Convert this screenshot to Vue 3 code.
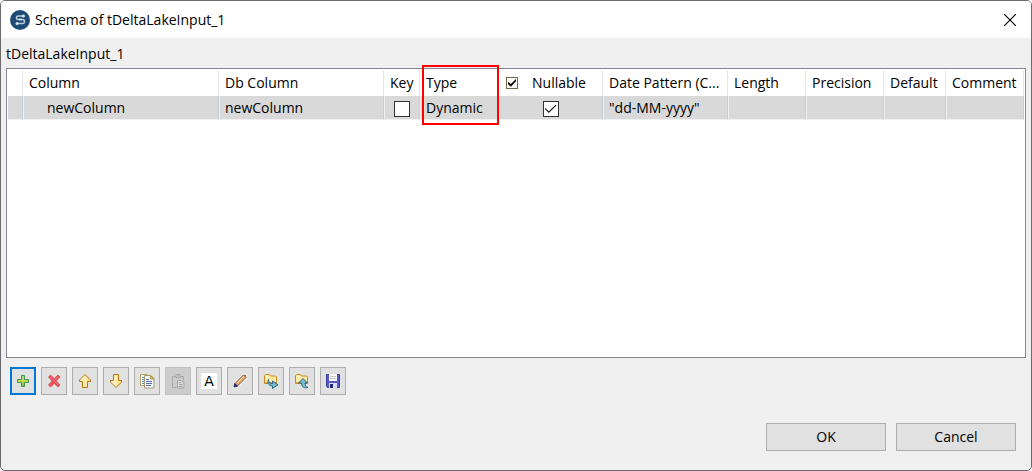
<script setup>
import { ref } from 'vue'

const allNullable = ref(true)
const columns = [
  { id: 'mark', label: '', width: 15 },
  { id: 'column', label: 'Column', width: 196 },
  { id: 'db', label: 'Db Column', width: 165 },
  { id: 'key', label: 'Key', width: 36 },
  { id: 'type', label: 'Type', width: 78 },
  { id: 'nullable', label: 'Nullable', width: 105 },
  { id: 'pattern', label: 'Date Pattern (C...', width: 125 },
  { id: 'length', label: 'Length', width: 78 },
  { id: 'precision', label: 'Precision', width: 78 },
  { id: 'default', label: 'Default', width: 62 },
  { id: 'comment', label: 'Comment', width: 78 }
]
const rows = ref([
  { column: 'newColumn', db: 'newColumn', key: false, type: 'Dynamic', nullable: true, pattern: '"dd-MM-yyyy"' }
])
</script>

<template>
  <main class="dialog">
    <header class="titlebar">
      <svg class="logo" viewBox="0 0 20 20" aria-hidden="true">
        <circle cx="10" cy="10" r="10" fill="#1d4b75" />
        <path d="M13 6H8.200a1.700 1.700 0 0 0 0 3.500h4.300a2 2 0 0 1 0 4H8" fill="none" stroke="#b9cad9" stroke-width="1.500" />
        <circle cx="13.500" cy="6" r="1.500" fill="#dce6ee" />
        <circle cx="7" cy="13.500" r="1.500" fill="#dce6ee" />
        <path d="M9 9.500h3" stroke="#eef3f7" stroke-width="1.500" />
      </svg>
      <h1>Schema of tDeltaLakeInput_1</h1>
      <button class="close" type="button" aria-label="Close">
        <svg viewBox="0 0 12 12" width="12" height="12"><path d="M0 0L12 12M12 0L0 12" stroke="#000" stroke-width="1.100" /></svg>
      </button>
    </header>

    <h2 class="caption">tDeltaLakeInput_1</h2>

    <section class="grid">
      <table>
        <colgroup>
          <col v-for="c in columns" :key="c.id" :style="{ width: c.width + 'px' }" />
        </colgroup>
        <thead>
          <tr>
            <th v-for="c in columns" :key="c.id" :class="'c-' + c.id">
              <label v-if="c.id === 'nullable'" class="head-check">
                <input v-model="allNullable" type="checkbox" class="small" />
                <span>{{ c.label }}</span>
              </label>
              <span v-else-if="c.id === 'type'" class="marked">{{ c.label }}</span>
              <template v-else>{{ c.label }}</template>
            </th>
          </tr>
        </thead>
        <tbody>
          <tr v-for="(row, i) in rows" :key="i">
            <td v-for="c in columns" :key="c.id" :class="'c-' + c.id">
              <input v-if="c.id === 'key'" v-model="row.key" type="checkbox" aria-label="Key" />
              <input v-else-if="c.id === 'nullable'" v-model="row.nullable" type="checkbox" aria-label="Nullable" />
              <template v-else>{{ row[c.id] }}</template>
            </td>
          </tr>
        </tbody>
      </table>
    </section>

    <div class="toolbar" role="toolbar">
      <button type="button" class="active" aria-label="Add">
        <svg viewBox="0 0 16 16">
          <defs><linearGradient id="plus" x1="0" y1="0" x2="0" y2="1"><stop offset="0" stop-color="#a5d58a" /><stop offset=".5" stop-color="#c9dc4e" /><stop offset="1" stop-color="#6fb544" /></linearGradient></defs>
          <path d="M6.500 2.500h3v4h4v3h-4v4h-3v-4h-4v-3h4z" fill="url(#plus)" stroke="#3f9157" />
        </svg>
      </button>
      <button type="button" aria-label="Remove">
        <svg viewBox="0 0 16 16">
          <path d="M2.500 4l2-2 3.700 3.500L12 2l2 2-3.600 4 3.600 4-2 2-3.800-3.500L4.500 14l-2-2L6 8z" fill="#ee4f59" stroke="#d9606a" />
          <path d="M4.500 4l7.500 8M12 4l-3 3" stroke="#f5777c" />
        </svg>
      </button>
      <button type="button" aria-label="Move up">
        <svg viewBox="0 0 16 16">
          <defs><linearGradient id="gold"><stop offset="0" stop-color="#fffbe0" /><stop offset="1" stop-color="#ffdc78" /></linearGradient></defs>
          <path d="M8 1.500L13.500 7v1.500h-3v6h-5v-6h-3V7z" fill="url(#gold)" stroke="#b9790f" />
        </svg>
      </button>
      <button type="button" aria-label="Move down">
        <svg viewBox="0 0 16 16"><path d="M5.500 1.500h5v6h3V9L8 14.500 2.500 9V7.500h3z" fill="url(#gold)" stroke="#b9790f" /></svg>
      </button>
      <button type="button" aria-label="Copy">
        <svg viewBox="0 0 16 16">
          <path d="M1.500 1.500h7v11h-7z" fill="#fff" stroke="#b4a35b" />
          <path d="M3 4.500h3M3 6.500h2M3 8.500h2M3 10.500h2" stroke="#5c83b8" />
          <path d="M5.500 2.500h6.500l3 3v9.500H5.500z" fill="#f5f8fc" stroke="#a59b78" />
          <path d="M11.500 2.500v3.500H15z" fill="#e2c35c" stroke="#b4953f" />
          <path d="M7 6.500h3M7 8.500h6M7 10.500h6M7 12.500h5" stroke="#4f6fae" />
        </svg>
      </button>
      <button type="button" disabled aria-label="Paste">
        <svg viewBox="0 0 16 16" fill="none" stroke="#a8a8a8">
          <path d="M6.500 14.500h-4v-11h11v4" /><path d="M5.500 3.500l1-2h3l1 2v1h-5z" fill="#c0c0c0" />
          <path d="M7.500 7.500h4l2.500 2.500v5H7.500z" fill="#d8d8d8" /><path d="M9 9.500h2M9 11.500h3.500M9 13.500h3.500" />
        </svg>
      </button>
      <button type="button" aria-label="Font"><span class="letter">A</span></button>
      <button type="button" aria-label="Edit">
        <svg viewBox="0 0 16 16">
          <path d="M1 15l1-5L11 1h3l1 1v3L6 14z" fill="#f7f7f7" stroke="#f7f7f7" />
          <path d="M3 10.500l8.500-8.500 2 .5.500 2L5.500 13z" fill="#e5ad72" stroke="#81502b" />
          <path d="M5 10l7-7" stroke="#ffe0ac" /><path d="M2 14l.6-3.500 2.900 2.700z" fill="#202e70" stroke="#202e70" />
        </svg>
      </button>
      <button type="button" aria-label="Import">
        <svg viewBox="0 0 16 16">
          <path d="M1.500 10.500v-8l1-1h4l1 1.500h5l1 1v6.500z" fill="#ffeaa0" stroke="#ca8823" />
          <path d="M2 9.500h11" stroke="#e9ad4a" /><path d="M3 4h4" stroke="#fffadf" />
          <path d="M5.500 6.500c0 3 1.500 4 4 4V8L15 11.800 9.500 15.500V13C6 13 4 10 5.500 6.500z" fill="#78b9cb" stroke="#23678c" />
        </svg>
      </button>
      <button type="button" aria-label="Export">
        <svg viewBox="0 0 16 16">
          <path d="M1.500 10.500v-8l1-1h4l1 1.500h5l1 1v6.500z" fill="#ffeaa0" stroke="#ca8823" />
          <path d="M2 9.500h11" stroke="#e9ad4a" /><path d="M3 4h4" stroke="#fffadf" />
          <path d="M9 5.500l4.500 4.500h-2.500c0 2 .5 3.500 3 4.500-4 1-6.500-.5-6.500-4.500H4.500z" fill="#78b9cb" stroke="#23678c" />
        </svg>
      </button>
      <button type="button" aria-label="Save">
        <svg viewBox="0 0 16 16">
          <path d="M1.500 1.500h13v13h-12l-1-1z" fill="#5658c5" stroke="#3e3e9f" />
          <path d="M4 1h8v7H4z" fill="#fff" /><path d="M5 3.500h6M5 5.500h6" stroke="#c9c9c9" />
          <path d="M4 10h8v5H4z" fill="#d8dcf0" /><path d="M5 11h3v4H5z" fill="#28286f" />
        </svg>
      </button>
    </div>

    <footer class="actions">
      <button type="button">OK</button>
      <button type="button">Cancel</button>
    </footer>
  </main>
</template>

<style>
body {
  background: #fff;
}
</style>

<style scoped>
*,
*::after {
  box-sizing: border-box;
}
.dialog {
  display: flex;
  flex-direction: column;
  min-height: 100vh;
  overflow: hidden;
  border: 1px solid #6b6b6b;
  border-radius: 5px;
  background: #f0f0f0;
  color: #000;
  font: 14px/20px "Open Sans", "Noto Sans", sans-serif;
}
button {
  padding: 0;
  color: inherit;
  font: inherit;
}
.titlebar {
  display: flex;
  align-items: center;
  height: 37px;
  padding: 0 13px 0 9px;
  gap: 5px;
  background: #fff;
}
.logo {
  width: 20px;
  height: 20px;
}
h1,
h2 {
  margin: 0;
  font-size: 14px;
  font-weight: 400;
}
.close {
  display: grid;
  margin-left: auto;
  padding: 2px;
  border: 0;
  background: none;
}
.caption {
  padding: 6px 5px 4px;
}
.grid {
  flex: 1;
  margin: 0 5px;
  padding: 1px 1px 0;
  border: 1px solid #828790;
  background: #fff;
}
table {
  width: 100%;
  table-layout: fixed;
  border-collapse: separate;
  border-spacing: 0;
}
th,
td {
  padding: 0 0 0 5px;
  border-right: 1px solid #e5e5e5;
  font-weight: 400;
  text-align: left;
  white-space: nowrap;
}
th {
  height: 26px;
}
td {
  height: 24px;
  border-right-color: #c3cfda;
  border-bottom: 1px solid #f0f0f0;
  background: #d9d9d9;
}
td + td {
  border-left: 1px solid #f0f0f0;
}
th + th {
  padding-left: 6px;
}
td.c-column {
  padding-left: 23px;
}
th.c-nullable {
  padding-left: 8px;
}
td.c-key,
td.c-nullable {
  padding: 0;
  text-align: center;
}
.head-check {
  display: flex;
  align-items: center;
  gap: 14px;
}
th.c-type {
  position: relative;
}
.marked::after {
  content: "";
  position: absolute;
  z-index: 1;
  top: -5px;
  left: 2px;
  width: 77px;
  height: 60px;
  border: 2px solid #f00;
  pointer-events: none;
}
input {
  display: inline-grid;
  place-items: center;
  appearance: none;
  width: 16px;
  height: 16px;
  margin: 0;
  border: 1px solid #333;
  background: #fff;
  vertical-align: middle;
}
input:checked::after {
  content: "";
  width: 12px;
  height: 10px;
  background: #222;
  clip-path: polygon(0 50%, 8% 42%, 36% 74%, 92% 10%, 100% 18%, 36% 92%);
}
.small {
  width: 12px;
  height: 12px;
  border-color: #6b6b45;
}
.small:checked::after {
  width: 8px;
  height: 8px;
  background: #000;
  clip-path: polygon(0 35%, 36% 64%, 100% 0, 100% 28%, 36% 96%, 0 64%);
}
.toolbar {
  display: flex;
  flex-wrap: wrap;
  gap: 5px;
  padding: 9px 9px 0;
}
.toolbar button {
  display: grid;
  place-items: center;
  width: 26px;
  height: 28px;
  border: 1px solid #adadad;
  background: #e1e1e1;
}
.toolbar .active {
  border: 2px solid #0078d7;
}
.toolbar button:disabled {
  border-color: #bfbfbf;
  background: #ccc;
}
.toolbar svg {
  width: 16px;
  height: 16px;
}
.letter {
  width: 16px;
  height: 16px;
  background: #fff;
  font: 14px/16px "DejaVu Sans", sans-serif;
}
.actions {
  display: flex;
  justify-content: flex-end;
  gap: 10px;
  padding: 28px 15px 19px;
}
.actions button {
  width: 120px;
  height: 28px;
  border: 1px solid #adadad;
  background: #e1e1e1;
}
</style>
